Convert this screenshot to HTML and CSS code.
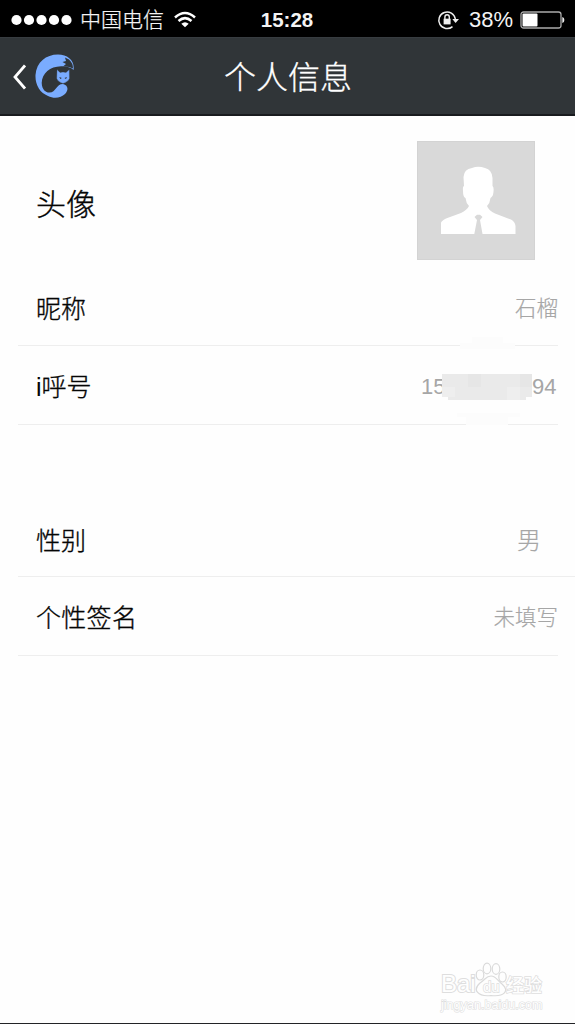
FILE: index.html
```html
<!DOCTYPE html>
<html lang="zh-CN">
<head>
<meta charset="utf-8">
<title>个人信息</title>
<link rel="stylesheet" href="styles.css">
</head>
<body>
<div class="screen">
  <div class="status">
    <div class="status-left">
      <svg class="signal" viewBox="0 0 61 12" width="61" height="12" fill="#fff"><circle cx="5.5" cy="6" r="5.1"/><circle cx="18" cy="6" r="5.1"/><circle cx="30.5" cy="6" r="5.1"/><circle cx="43" cy="6" r="5.1"/><circle cx="55.5" cy="6" r="5.1"/></svg>
      <span class="carrier">中国电信</span>
      <svg class="wifi" viewBox="0 0 22 17" width="22" height="17" fill="none" stroke="#fff" stroke-width="2.5"><path d="M1 6.5Q11-2.5 21 6.5M4.5 10Q11 4.2 17.5 10"/><path d="M7.3 12.8Q11 9.6 14.7 12.8L11 16.3Z" fill="#fff" stroke="none"/></svg>
    </div>
    <div class="clock">15:28</div>
    <div class="status-right">
      <svg class="lock" viewBox="0 0 22 20" width="22" height="20" fill="none" stroke="#eee" stroke-width="1.5"><path d="M15.5 16.6A8.3 8.3 0 1 1 18.3 9"/><path d="M15.3 9H22L18.6 13Z" fill="#eee" stroke="none"/><path d="M7.9 9V7a2.2 2.2 0 0 1 4.4 0V9" stroke-width="1.4"/><rect x="6.6" y="8.7" width="7" height="5.7" fill="#eee" stroke="none"/></svg>
      <span class="percent">38%</span>
      <svg class="battery" viewBox="0 0 45 18" width="45" height="18"><rect x="1" y="1" width="40" height="16" rx="2.5" fill="none" stroke="#aaa" stroke-width="1.3"/><rect x="2.5" y="2.5" width="15" height="13" rx="1" fill="#fff"/><path d="M42.3 6C45 6.5 45 11.5 42.3 12Z" fill="#eee"/></svg>
    </div>
  </div>
  <div class="header">
    <div class="back">
      <svg viewBox="0 0 13 26" width="13" height="26" fill="none" stroke="#fff" stroke-width="2.8"><path d="M12 1.5L2 13L12 24.5"/></svg>
      <svg class="logo" viewBox="0 0 40 44" width="40" height="44"><path d="M38.5 16C36 13 31 12 26 12.2C15 12.5 7 19 6.7 29C7 36 11 38.5 14 38.5C21 39 21 30 28 30C33 31 34 36 30 40C26 44 19 45 13 42C5 39 0 31 .5 21C1.5 8 11 .5 23 .5C33 .5 40 7 38.5 16Z" fill="#7aacff"/><path d="M30 3.5L34 5.500Q38 9 38 14.500Q34 12 28 12.500L31 10L27.500 8L31 7Z" fill="#30363a"/><path d="M22 15.500L25 18.500Q28 17.500 31 18.500L34.300 15.500L34.500 24.500Q33 28 28 29.500Q23 28 21.700 24.500Z" fill="#7aacff" stroke="#30363a" stroke-width=".3"/><path d="M24.300 23L26.900 24L25.300 25ZM32 23L29.400 24L31 25Z" fill="#30363a"/></svg>
    </div>
    <div class="title">个人信息</div>
  </div>
  <div class="row avatar-row">
    <span class="label big">头像</span>
    <svg class="avatar" viewBox="0 0 118 119" width="118" height="119"><rect x=".5" y=".5" width="117" height="118" fill="#d9d9d9" stroke="#d3d3d3"/><path d="M46.5 36Q47 28 55 27Q61 24.5 68 27Q75 28.5 75.5 37V45Q77.5 46 76 54Q75 56 73.5 57Q73 62 70 65Q72 70 78 72.5L94 78.5Q98 80.5 98.5 85V93H65.5L63 79L65.5 76L63 73.8H60L57.5 76L60 79L57.3 93H24V82Q24 80 29 77.500L44 72Q50 69 52 65Q49 62 48.500 57Q46 56 46 50Q45.500 45 47 45Z" fill="#fff"/></svg>
  </div>
  <div class="row nick-row"><span class="label">昵称</span><span class="value">石榴</span></div>
  <div class="row id-row">
    <span class="label"><span class="latin">i</span>呼号</span>
    <svg class="smudge" viewBox="0 0 70 88" width="70" height="88"><path d="M15 0H46V6H58V12H3V6H15Z" fill="#fcfcfc"/><path d="M0 76H63V80H51V88H9V80H0Z" fill="#fcfcfc"/></svg>
    <span class="value number"><span>15</span><svg class="mosaic" viewBox="0 0 90 26" width="90" height="26" shape-rendering="crispEdges"><path d="M0 0H90V23H84V26H6V23H0Z" fill="#eaeaea"/><path d="M26 0H39V13H26ZM78 0H90V13H78Z" fill="#e6e6e6"/><path d="M0 13H13V23H6V23H0ZM65 13H78V26H65Z" fill="#eee"/></svg><span>94</span></span>
  </div>
  <div class="row gender-row"><span class="label">性别</span><span class="value">男</span></div>
  <div class="row sign-row"><span class="label">个性签名</span><span class="value">未填写</span></div>
  <div class="watermark">
    <div class="mark-top"><span class="bai">Bai</span><span class="paw"><svg viewBox="0 0 32 35" width="32" height="35" fill="#fefefe" stroke="#dadada" stroke-width="1.2"><ellipse cx="5" cy="13" rx="3.8" ry="5"/><ellipse cx="12" cy="6.5" rx="3.8" ry="5.3"/><ellipse cx="21" cy="7" rx="3.8" ry="5.3"/><ellipse cx="27.5" cy="15" rx="3.7" ry="5"/><path d="M16 14C11 14 11 17 5 21C-3 28 3 35 16 33.5C29 35 35 29 27 22C22 18 21 14 16 14Z"/></svg><span class="du">du</span></span><span class="jy">经验</span></div>
    <div class="mark-url">jingyan.baidu.com</div>
  </div>
</div>
</body>
</html>
```
FILE: styles.css
```css
* { box-sizing: border-box; }
body { margin: 0; background: #fefefe; font-family: "Liberation Sans", "Noto Sans CJK SC", sans-serif; }
svg { display: block; flex: none; }
.screen { position: relative; width: 575px; height: 1024px; overflow: hidden; background: #fefefe; border-bottom: 1px solid #222326; display: flex; flex-direction: column; }
.status { flex: none; height: 37px; background: #000; color: #f4f4f4; display: grid; grid-template-columns: 1fr auto 1fr; align-items: center; padding: 2px 10px 0 11px; }
.status-left, .status-right { display: flex; align-items: center; }
.status-right { justify-content: flex-end; }
.carrier { margin-left: 8px; font-size: 21px; line-height: 30px; font-weight: 300; -webkit-text-stroke: .25px; }
.wifi { margin-left: 10px; }
.clock { position: relative; left: -1px; font-size: 20.5px; font-weight: bold; line-height: 30px; }
.percent { margin: 0 7px 0 10px; font-size: 22px; line-height: 30px; }
.header { flex: none; height: 79px; background: #303538; border-top: 1px solid #373c40; border-bottom: 2px solid #191b1e; display: grid; grid-template-columns: 1fr auto 1fr; align-items: center; color: #fff; padding: 1px 0 0 13px; }
.back { display: flex; align-items: center; gap: 9px; }
.logo { margin-bottom: 2px; }
.title { margin-right: 12px; padding-top: 3px; font-size: 32px; line-height: 48px; font-weight: 300; -webkit-text-stroke: .3px; }
.row { flex: none; position: relative; display: flex; justify-content: space-between; align-items: center; margin: 0 17px 0 18px; padding: 2px 0 0 18px; border-bottom: 1px solid #eee; color: #050505; }
.label { font-size: 25px; line-height: 36px; font-weight: 300; -webkit-text-stroke: .35px; }
.latin { -webkit-text-stroke: 0; }
.big { font-size: 30px; line-height: 44px; padding-top: 8px; }
.value { font-size: 21.5px; line-height: 32px; font-weight: 300; color: #a6a6a6; -webkit-text-stroke: .2px; }
.avatar-row { height: 154px; border: 0; padding: 25px 23px 10px 18px; }
.nick-row { height: 76px; }
.id-row { height: 79px; padding-top: 4px; }
.number { position: relative; left: -1px; display: flex; align-items: center; font-size: 22px; font-weight: 400; -webkit-text-stroke: 0; }
.number span { width: 21px; white-space: nowrap; }
.number span:last-child { width: 25px; }
.smudge { position: absolute; left: 439px; top: -9px; }
.gender-row { height: 72px; margin: 80px 0 0 18px; padding: 0 34px 0 18px; }
.gender-row .value { font-size: 24px; }
.sign-row { height: 79px; padding-top: 4px; }
.sign-row .label { letter-spacing: .3px; }
.watermark { position: absolute; left: 441px; top: 962px; width: 110px; color: #fefefe; -webkit-text-stroke: 2px #dedede; paint-order: stroke fill; }
.watermark svg { paint-order: normal; }
.mark-top { display: flex; align-items: flex-end; height: 36px; }
.bai { font-size: 24px; line-height: 24px; width: 34px; padding-bottom: 2px; }
.paw { position: relative; width: 31px; height: 36px; }
.du { position: absolute; left: 8px; top: 16px; font-size: 15px; line-height: 17px; -webkit-text-stroke-width: 1.5px; }
.jy { font-size: 18px; line-height: 24px; font-weight: 500; -webkit-text-stroke-width: 1.5px; }
.mark-url { padding-top: 1px; font-family: "Liberation Sans", sans-serif; font-size: 12.6px; line-height: 12px; -webkit-text-stroke-width: 1.2px; white-space: nowrap; }
```
